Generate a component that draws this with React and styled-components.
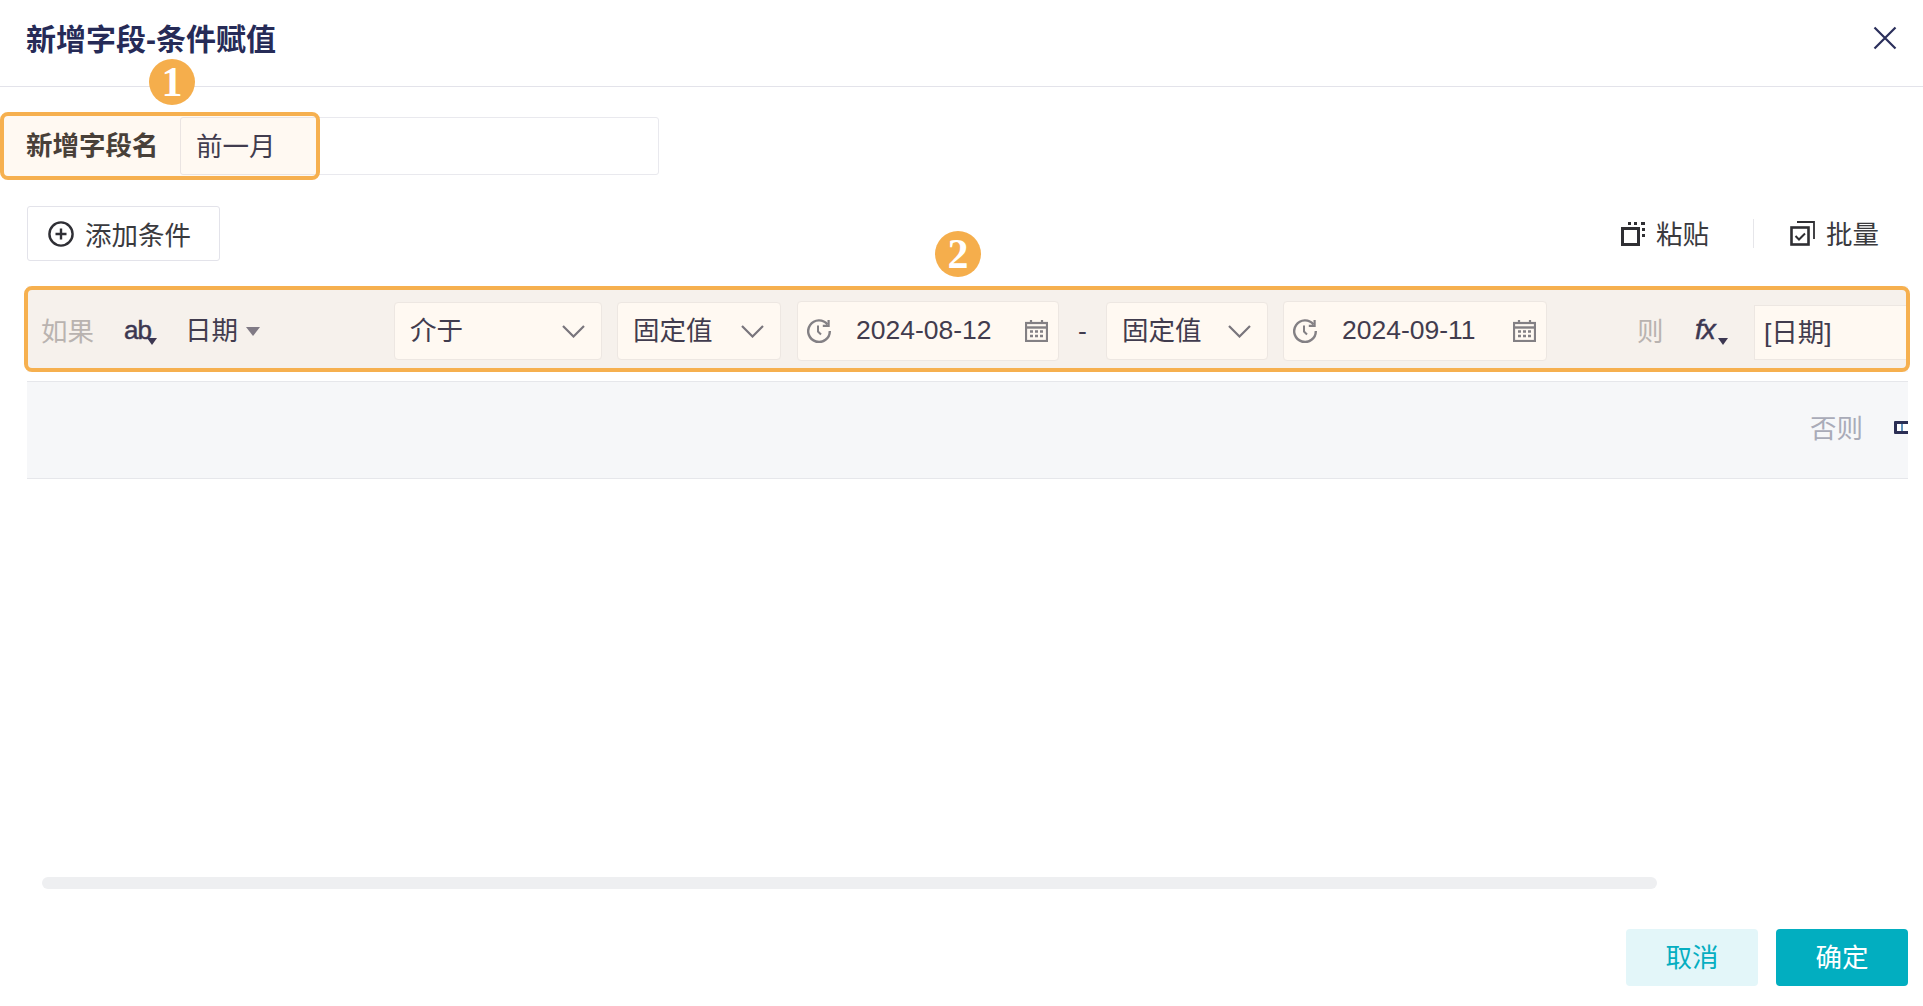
import React from "react";
import styled, { createGlobalStyle } from "styled-components";

const FONT = `"Liberation Sans", "Noto Sans CJK SC", sans-serif`;

export default function App() {
  return (
    <>
      <GlobalStyle />
      <Modal>
        <Header>
          <Title>新增字段-条件赋值</Title>
          <CloseIcon />
        </Header>

        <NameRow>
          <NameLabel>新增字段名</NameLabel>
          <NameInput>前一月</NameInput>
          <Highlight $left={-27} $top={-5} $width={320} $height={68} />
          <Badge $left={122} $top={-58}>1</Badge>
        </NameRow>

        <Toolbar>
          <AddButton>
            <PlusCircle />
            添加条件
          </AddButton>
          <Actions>
            <Action>
              <PasteIcon />
              <ActionText>粘贴</ActionText>
            </Action>
            <Divider />
            <Action>
              <BatchIcon />
              <ActionText>批量</ActionText>
            </Action>
          </Actions>
        </Toolbar>

        <RowWrap>
          <CondRow>
            <Muted>如果</Muted>
            <TypeMark $gap={31} $width={33}>
              ab
              <TinyCaret />
            </TypeMark>
            <FieldName>
              <Label>日期</Label>
              <Caret />
            </FieldName>
            <Select $width={208}>
              <Label>介于</Label>
              <Chevron />
            </Select>
            <Select $width={164} $gap={15}>
              <Label>固定值</Label>
              <Chevron />
            </Select>
            <DateBox $width={262} $gap={16}>
              <ClockIcon />
              <DateText>2024-08-12</DateText>
              <CalendarIcon />
            </DateBox>
            <Dash>-</Dash>
            <Select $width={162} $gap={19}>
              <Label>固定值</Label>
              <Chevron />
            </Select>
            <DateBox $width={264} $gap={15}>
              <ClockIcon />
              <DateText>2024-09-11</DateText>
              <CalendarIcon />
            </DateBox>
            <Muted $gap={90} $width={26}>则</Muted>
            <TypeMark $gap={32} $width={33} $italic>
              fx
              <TinyCaret />
            </TypeMark>
            <FormulaInput>[日期]</FormulaInput>
          </CondRow>
          <Frame />
          <Badge $left={908} $top={-55}>2</Badge>
        </RowWrap>

        <ElseRow>
          <ElseLabel>否则</ElseLabel>
          <ClippedIcon />
        </ElseRow>

        <Spacer />
        <ScrollBar />

        <Footer>
          <CancelButton>取消</CancelButton>
          <OkButton>确定</OkButton>
        </Footer>
      </Modal>
    </>
  );
}

function CloseIcon() {
  return (
    <CloseSvg viewBox="0 0 24 24">
      <path d="M1.500 1.500l21 21M22.500 1.500l-21 21" stroke="#2a2f5b" strokeWidth="2.2" fill="none" />
    </CloseSvg>
  );
}

function PlusCircle() {
  return (
    <svg width="26" height="26" viewBox="0 0 26 26" fill="none" stroke="#2f2f35" strokeWidth="2.4">
      <circle cx="13" cy="13" r="11.6" />
      <path d="M13 7.500v11M7.500 13h11" />
    </svg>
  );
}

function PasteIcon() {
  return (
    <svg width="24" height="24" viewBox="0 0 24 24" fill="none" stroke="#2f2f33">
      <rect x="1.500" y="6.500" width="16" height="16" strokeWidth="3" />
      <path d="M7 1.500h3M13 1.500h3M20 1.500h4M22.500 6v3M22.500 12v3" strokeWidth="3" />
    </svg>
  );
}

function BatchIcon() {
  return (
    <svg width="25" height="25" viewBox="0 0 25 25" fill="none" stroke="#2f2f33">
      <rect x="1.500" y="6.500" width="17" height="17" strokeWidth="2.6" />
      <path d="M7 1h17v17" strokeWidth="1.800" />
      <path d="M5.500 15l3.500 3.500 6-6" strokeWidth="2" />
    </svg>
  );
}

function ClockIcon() {
  return (
    <svg width="24" height="24" viewBox="0 0 24 24" fill="none" stroke="#7a7d89" strokeWidth="2.400">
      <path d="M20.500 5.500A10.800 10.800 0 1 0 22.800 12" />
      <path d="M21.600 1v5.800h-5.800" strokeWidth="2.200" />
      <path d="M11 6.500v6l3 3" strokeWidth="2" />
    </svg>
  );
}

function CalendarIcon() {
  return (
    <svg width="23" height="22" viewBox="0 0 23 22" fill="none" stroke="#7a7d89">
      <rect x="1" y="3" width="21" height="18" strokeWidth="2.200" />
      <path d="M1 7.500h21" strokeWidth="2.400" />
      <path d="M6 0v4M17 0v4" strokeWidth="2.200" />
      <path d="M5 11.500h3M10 11.500h3M15 11.500h3M5 16h3M10 16h3M15 16h3" strokeWidth="2.600" />
    </svg>
  );
}

function Chevron() {
  return (
    <svg width="23" height="13" viewBox="0 0 23 13" fill="none" stroke="#6f7180" strokeWidth="2.200">
      <path d="M1 1l10.500 10.500L22 1" />
    </svg>
  );
}

//#region  style

const GlobalStyle = createGlobalStyle`
  html, body {
    margin: 0;
    padding: 0;
    background: #fff;
    overflow: hidden;
  }
  * {
    box-sizing: border-box;
  }
`;

const Modal = styled.div`
  width: 1923px;
  height: 1006px;
  display: flex;
  flex-direction: column;
  font-family: ${FONT};
  font-size: 26.5px;
  color: #33344f;
  background: #fff;
`;

const Header = styled.div`
  height: 87px;
  flex: none;
  padding: 0 26px 12px 26px;
  display: flex;
  align-items: center;
  justify-content: space-between;
  border-bottom: 1px solid #e3e3ea;
`;

const Title = styled.div`
  font-size: 30px;
  font-weight: 700;
  color: #262b57;
`;

const CloseSvg = styled.svg`
  width: 24px;
  height: 24px;
  margin-top: 2px;
`;

const NameRow = styled.div`
  position: relative;
  flex: none;
  display: flex;
  margin: 30px 0 0 27px;
  width: 632px;
  height: 58px;
`;

const NameLabel = styled.div`
  width: 154px;
  display: flex;
  align-items: center;
  padding-bottom: 5px;
  margin-left: -1px;
  white-space: nowrap;
  font-weight: 700;
  color: #3b3838;
`;

const NameInput = styled.div`
  flex: 1;
  display: flex;
  align-items: center;
  padding: 0 0 3px 15px;
  border: 1px solid #e9e9ee;
  border-radius: 3px;
`;

const Highlight = styled.div`
  position: absolute;
  left: ${(p) => p.$left}px;
  top: ${(p) => p.$top}px;
  width: ${(p) => p.$width}px;
  height: ${(p) => p.$height}px;
  border: 4px solid #f6b04f;
  border-radius: 8px;
  background: rgba(255, 170, 70, 0.07);
  pointer-events: none;
`;

const Badge = styled.div`
  position: absolute;
  left: ${(p) => p.$left}px;
  top: ${(p) => p.$top}px;
  width: 46px;
  height: 46px;
  border-radius: 50%;
  background: #f5ae4c;
  color: #fff;
  display: flex;
  align-items: center;
  justify-content: center;
  font-family: "Liberation Serif", serif;
  font-size: 42px;
  font-weight: 700;
  line-height: 1;
`;

const Toolbar = styled.div`
  flex: none;
  margin-top: 31px;
  padding: 0 44px 0 27px;
  display: flex;
  align-items: center;
  justify-content: space-between;
`;

const AddButton = styled.div`
  width: 193px;
  height: 55px;
  display: flex;
  align-items: center;
  gap: 11px;
  padding-left: 20px;
  border: 1px solid #e3e3ea;
  border-radius: 3px;
  color: #3a3a3e;
`;

const Actions = styled.div`
  display: flex;
  align-items: center;
`;

const Action = styled.div`
  display: flex;
  align-items: center;
  gap: 11px;
  color: #3a3a3e;
`;

const ActionText = styled.span`
  margin-bottom: 2px;
`;

const Divider = styled.div`
  width: 1px;
  height: 29px;
  margin: 0 36px 0 44px;
  background: #e6e6ea;
`;

const RowWrap = styled.div`
  position: relative;
  flex: none;
  margin: 25px 15px 0 27px;
`;

const CondRow = styled.div`
  height: 86px;
  padding: 16px 0 0 14px;
  display: flex;
  align-items: flex-start;
  overflow: hidden;
  background: #f6f7f9;
`;

const Frame = styled.div`
  position: absolute;
  inset: 0 -2px 0 -3px;
  border: 4px solid #f6b04f;
  border-radius: 8px;
  background: rgba(255, 170, 70, 0.07);
  pointer-events: none;
`;

const Muted = styled.div`
  flex: none;
  height: 58px;
  line-height: 61px;
  white-space: nowrap;
  width: ${(p) => p.$width || 52}px;
  margin-left: ${(p) => p.$gap || 0}px;
  color: #b4b4b8;
`;

const TypeMark = styled.div`
  position: relative;
  flex: none;
  height: 58px;
  line-height: 56px;
  width: ${(p) => p.$width}px;
  margin-left: ${(p) => p.$gap}px;
  font-size: ${(p) => (p.$italic ? 28 : 26)}px;
  letter-spacing: -1px;
  color: #2e2f52;
  font-style: ${(p) => (p.$italic ? "italic" : "normal")};
  -webkit-text-stroke: 0.5px #2e2f52;
`;

const TinyCaret = styled.span`
  position: absolute;
  right: 0;
  bottom: 15px;
  border-left: 5px solid transparent;
  border-right: 5px solid transparent;
  border-top: 7px solid #2e2f52;
`;

const FieldName = styled.div`
  flex: none;
  width: 209px;
  height: 58px;
  margin-left: 28px;
  display: flex;
  align-items: center;
  gap: 8px;
`;

const Caret = styled.span`
  border-left: 7px solid transparent;
  border-right: 7px solid transparent;
  border-top: 9px solid #77778a;
`;

const Label = styled.span`
  margin-bottom: 5px;
`;

const Select = styled.div`
  flex: none;
  width: ${(p) => p.$width}px;
  height: 58px;
  margin-left: ${(p) => p.$gap || 0}px;
  padding: 0 16px 0 15px;
  display: flex;
  align-items: center;
  justify-content: space-between;
  background: #fff;
  border: 1px solid #ececee;
  border-radius: 4px;
`;

const DateBox = styled.div`
  flex: none;
  width: ${(p) => p.$width}px;
  height: 60px;
  margin-top: -1px;
  margin-left: ${(p) => p.$gap}px;
  padding: 0 10px 0 9px;
  display: flex;
  align-items: center;
  justify-content: space-between;
  background: #fff;
  border: 1px solid #ececee;
  border-radius: 4px;
`;

const DateText = styled.span`
  flex: 1;
  margin-bottom: 2px;
  padding-left: 25px;
  white-space: nowrap;
`;

const Dash = styled.div`
  flex: none;
  width: 9px;
  height: 58px;
  line-height: 58px;
  margin-left: 19px;
`;

const FormulaInput = styled.div`
  flex: none;
  width: 300px;
  height: 55px;
  margin: 3px 0 0 26px;
  padding: 0 0 5px 9px;
  display: flex;
  align-items: center;
  background: #fff;
  border: 1px solid #ececee;
`;

const ElseRow = styled.div`
  flex: none;
  height: 98px;
  margin: 9px 15px 0 27px;
  padding-left: 1783px;
  display: flex;
  align-items: center;
  overflow: hidden;
  background: #f6f7f9;
  border-top: 1px solid #e6e7eb;
  border-bottom: 1px solid #e6e7eb;
`;

const ElseLabel = styled.div`
  flex: none;
  margin-bottom: 7px;
  color: #a9abb8;
`;

const ClippedIcon = styled.div`
  flex: none;
  width: 30px;
  height: 13px;
  margin: -5px 0 0 31px;
  border: 3px solid #2b2f55;
  border-radius: 1px;
  background: linear-gradient(90deg, #fff 4px, #5f93bd 4px, #5f93bd 6px, #fff 6px);
`;

const Spacer = styled.div`
  flex: 1;
`;

const ScrollBar = styled.div`
  flex: none;
  width: 1615px;
  height: 12px;
  margin-left: 42px;
  border-radius: 6px;
  background: #eeeff1;
`;

const Footer = styled.div`
  flex: none;
  margin-top: 40px;
  padding: 0 15px 20px 0;
  display: flex;
  justify-content: flex-end;
  gap: 18px;
`;

const CancelButton = styled.div`
  width: 132px;
  height: 57px;
  padding-bottom: 5px;
  display: flex;
  align-items: center;
  justify-content: center;
  border-radius: 4px;
  background: #e3f6f9;
  color: #05aec1;
`;

const OkButton = styled(CancelButton)`
  background: #02aec0;
  color: #fff;
`;

//#endregion
